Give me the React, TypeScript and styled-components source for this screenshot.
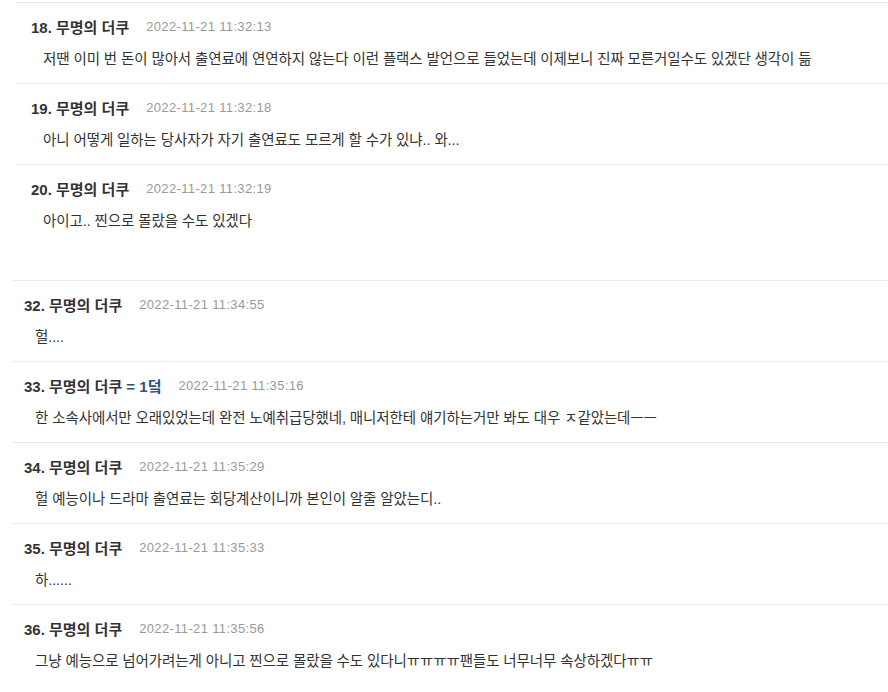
import { createGlobalStyle, styled } from 'styled-components'

const GlobalStyle = createGlobalStyle`
  html, body {
    margin: 0;
    padding: 0;
    background: #fff;
  }
  body {
    font-family: "Liberation Sans", "Noto Sans CJK KR", sans-serif;
    color: #333;
  }
`

const Page = styled.div`
  width: 888px;
  display: flex;
  flex-direction: column;
`

const Section = styled.ul<{ $inset: number; $gap: number }>`
  list-style: none;
  margin: ${p => p.$gap}px 0 0 ${p => p.$inset}px;
  padding: 0;
  border-top: 1px solid #ececec;
`

const Item = styled.li<{ $pad: number }>`
  padding: 13px 0 14px ${p => p.$pad}px;
  border-bottom: 1px solid #ececec;
  &:last-child {
    border-bottom-color: transparent;
  }
`

const Head = styled.div`
  display: flex;
  align-items: center;
  height: 20px;
  margin-bottom: 13px;
  gap: 17px;
`

const Name = styled.span`
  font-size: 15px;
  font-weight: 700;
  color: #333;
  white-space: nowrap;
`

const Op = styled.span`
  color: #2f4f86;
`

const Date = styled.span`
  font-size: 13px;
  color: #999;
  letter-spacing: 0.35px;
`

const Body = styled.p<{ $indent: number }>`
  margin: 0;
  height: 20px;
  line-height: 20px;
  padding-left: ${p => p.$indent}px;
  font-size: 14.5px;
  letter-spacing: -0.1px;
  color: #333;
  white-space: nowrap;
`

type Comment = { no: number; date: string; text: string; op?: boolean }

const first: Comment[] = [
  {
    no: 18,
    date: '2022-11-21 11:32:13',
    text: '저땐 이미 번 돈이 많아서 출연료에 연연하지 않는다 이런 플랙스 발언으로 들었는데 이제보니 진짜 모른거일수도 있겠단 생각이 듦',
  },
  {
    no: 19,
    date: '2022-11-21 11:32:18',
    text: '아니 어떻게 일하는 당사자가 자기 출연료도 모르게 할 수가 있냐.. 와...',
  },
  { no: 20, date: '2022-11-21 11:32:19', text: '아이고.. 찐으로 몰랐을 수도 있겠다' },
]

const second: Comment[] = [
  { no: 32, date: '2022-11-21 11:34:55', text: '헐....' },
  {
    no: 33,
    op: true,
    date: '2022-11-21 11:35:16',
    text: '한 소속사에서만 오래있었는데 완전 노예취급당했네, 매니저한테 얘기하는거만 봐도 대우 ㅈ같았는데ㅡㅡ',
  },
  {
    no: 34,
    date: '2022-11-21 11:35:29',
    text: '헐 예능이나 드라마 출연료는 회당계산이니까 본인이 알줄 알았는디..',
  },
  { no: 35, date: '2022-11-21 11:35:33', text: '하......' },
  {
    no: 36,
    date: '2022-11-21 11:35:56',
    text: '그냥 예능으로 넘어가려는게 아니고 찐으로 몰랐을 수도 있다니ㅠㅠㅠㅠ팬들도 너무너무 속상하겠다ㅠㅠ',
  },
]

function CommentList({
  items,
  inset,
  pad,
  indent,
  gap,
}: {
  items: Comment[]
  inset: number
  pad: number
  indent: number
  gap: number
}) {
  return (
    <Section $inset={inset} $gap={gap}>
      {items.map(c => (
        <Item key={c.no} $pad={pad}>
          <Head>
            <Name>
              {c.no}. 무명의 더쿠{c.op && <Op> = 1덬</Op>}
            </Name>
            <Date>{c.date}</Date>
          </Head>
          <Body $indent={indent}>{c.text}</Body>
        </Item>
      ))}
    </Section>
  )
}

export default function App() {
  return (
    <>
      <GlobalStyle />
      <Page>
        <CommentList items={first} inset={16} pad={15} indent={12} gap={2} />
        <CommentList items={second} inset={12} pad={12} indent={11} gap={34} />
      </Page>
    </>
  )
}
